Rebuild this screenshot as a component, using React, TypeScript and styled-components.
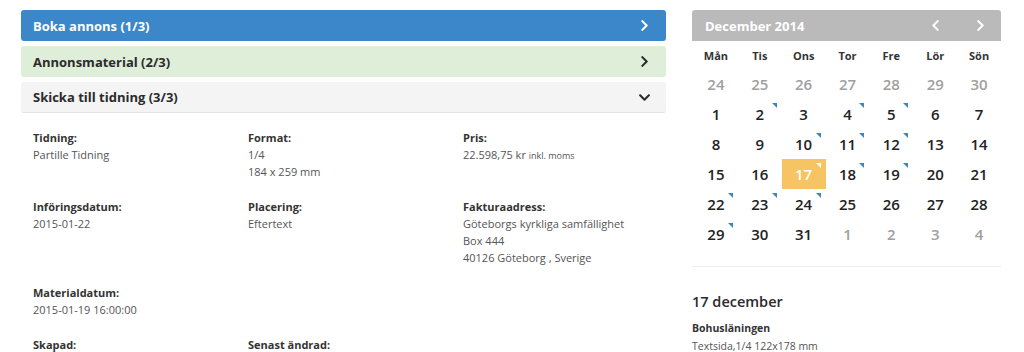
import styled, { createGlobalStyle } from "styled-components";
import { FaChevronRight, FaChevronLeft, FaChevronDown } from "react-icons/fa";

const GlobalStyle = createGlobalStyle`
  html, body {
    margin: 0;
    padding: 0;
    background: #fff;
  }
  body {
    font-family: "Open Sans", "Noto Sans", sans-serif;
    color: #333;
  }
`;

const Page = styled.div`
  display: flex;
  gap: 26px;
  padding: 10px 21px 0;
  width: 1024px;
  height: 352px;
  box-sizing: border-box;
  overflow: hidden;
`;

const Main = styled.div`
  width: 645px;
  flex-shrink: 0;
`;

const Steps = styled.div`
  display: flex;
  flex-direction: column;
  gap: 5px;
`;

const Step = styled.div<{ $variant: "active" | "done" | "open" }>`
  display: flex;
  align-items: center;
  justify-content: space-between;
  height: 31px;
  padding: 0 15px 0 12px;
  border-radius: 3px;
  font-size: 13px;
  font-weight: 700;
  box-sizing: border-box;
  background: ${(p) =>
    p.$variant === "active" ? "#3c87c9" : p.$variant === "done" ? "#dfeed9" : "#f4f4f4"};
  color: ${(p) => (p.$variant === "active" ? "#fff" : "#2b2b2b")};
  border-bottom: ${(p) => (p.$variant === "open" ? "1px solid #e3e3e3" : "none")};
  svg {
    width: 13px;
    height: 13px;
  }
`;

const Details = styled.div`
  display: flex;
  flex-direction: column;
  gap: 18px;
  padding: 16px 12px 0;
`;

const Row = styled.div`
  display: grid;
  grid-template-columns: 215px 215px 215px;
`;

const Field = styled.div`
  font-size: 11px;
  line-height: 17px;
  color: #555;
`;

const Label = styled.div`
  font-weight: 700;
  color: #333;
`;

const Small = styled.span`
  font-size: 9px;
`;

const Side = styled.div`
  width: 309px;
  flex-shrink: 0;
`;

const CalHeader = styled.div`
  display: flex;
  align-items: center;
  height: 31px;
  padding: 0 14px 0 13px;
  background: #bababa;
  border-radius: 3px 3px 0 0;
  color: #fff;
  font-size: 13px;
  font-weight: 700;
`;

const CalTitle = styled.div`
  flex: 1;
`;

const NavButton = styled.span`
  display: flex;
  width: 32px;
  justify-content: flex-end;
  svg {
    width: 13px;
    height: 13px;
  }
  & + & {
    width: 45px;
  }
`;

const Grid = styled.div`
  display: grid;
  grid-template-columns: repeat(7, 1fr);
  padding-left: 2px;
`;

const DayName = styled.div`
  height: 28px;
  display: flex;
  align-items: center;
  justify-content: center;
  font-size: 11px;
  font-weight: 700;
  color: #333;
`;

const Day = styled.div<{ $muted?: boolean; $selected?: boolean }>`
  position: relative;
  height: 30px;
  display: flex;
  align-items: center;
  justify-content: center;
  font-size: 15px;
  font-weight: 600;
  color: ${(p) => (p.$selected ? "#fff" : p.$muted ? "#a0a0a0" : "#222")};
  background: ${(p) => (p.$selected ? "#f6c463" : "transparent")};
`;

const Marker = styled.span<{ $light?: boolean }>`
  position: absolute;
  top: 4px;
  right: 5px;
  width: 0;
  height: 0;
  border-top: 5px solid ${(p) => (p.$light ? "#fff" : "#3f86bf")};
  border-left: 5px solid transparent;
`;

const Divider = styled.div`
  height: 1px;
  background: #eeeeee;
  margin: 17px 0 25px;
`;

const DayTitle = styled.div`
  font-size: 14.5px;
  font-weight: 600;
  color: #2b2b2b;
  margin-bottom: 9px;
`;

const Event = styled.div`
  font-size: 10.5px;
  line-height: 17.5px;
  color: #555;
`;

type Cell = { d: number; muted?: boolean; mark?: boolean; selected?: boolean };

const marked = new Set([2, 4, 5, 10, 11, 12, 17, 18, 19, 22, 23, 24, 29]);

const cells: Cell[] = [
  ...[24, 25, 26, 27, 28, 29, 30].map((d) => ({ d, muted: true })),
  ...Array.from({ length: 31 }, (_, i) => ({
    d: i + 1,
    mark: marked.has(i + 1),
    selected: i + 1 === 17,
  })),
  ...[1, 2, 3, 4].map((d) => ({ d, muted: true })),
];

const dayNames = ["Mån", "Tis", "Ons", "Tor", "Fre", "Lör", "Sön"];

const fields: { label: string; values: React.ReactNode[] }[][] = [
  [
    { label: "Tidning:", values: ["Partille Tidning"] },
    { label: "Format:", values: ["1/4", "184 x 259 mm"] },
    {
      label: "Pris:",
      values: [
        <>
          22.598,75 kr <Small>inkl. moms</Small>
        </>,
      ],
    },
  ],
  [
    { label: "Införingsdatum:", values: ["2015-01-22"] },
    { label: "Placering:", values: ["Eftertext"] },
    {
      label: "Fakturaadress:",
      values: ["Göteborgs kyrkliga samfällighet", "Box 444", "40126 Göteborg , Sverige"],
    },
  ],
  [{ label: "Materialdatum:", values: ["2015-01-19 16:00:00"] }],
  [
    { label: "Skapad:", values: [] },
    { label: "Senast ändrad:", values: [] },
  ],
];

export default function App() {
  return (
    <>
      <GlobalStyle />
      <Page>
        <Main>
          <Steps>
            <Step $variant="active">
              Boka annons (1/3)
              <FaChevronRight />
            </Step>
            <Step $variant="done">
              Annonsmaterial (2/3)
              <FaChevronRight />
            </Step>
            <Step $variant="open">
              Skicka till tidning (3/3)
              <FaChevronDown />
            </Step>
          </Steps>
          <Details>
            {fields.map((row, i) => (
              <Row key={i}>
                {row.map((f) => (
                  <Field key={f.label}>
                    <Label>{f.label}</Label>
                    {f.values.map((v, j) => (
                      <div key={j}>{v}</div>
                    ))}
                  </Field>
                ))}
              </Row>
            ))}
          </Details>
        </Main>
        <Side>
          <CalHeader>
            <CalTitle>December 2014</CalTitle>
            <NavButton>
              <FaChevronLeft />
            </NavButton>
            <NavButton>
              <FaChevronRight />
            </NavButton>
          </CalHeader>
          <Grid>
            {dayNames.map((n) => (
              <DayName key={n}>{n}</DayName>
            ))}
            {cells.map((c, i) => (
              <Day key={i} $muted={c.muted} $selected={c.selected}>
                {c.d}
                {c.mark && <Marker $light={c.selected} />}
              </Day>
            ))}
          </Grid>
          <Divider />
          <DayTitle>17 december</DayTitle>
          <Event>
            <Label>Bohusläningen</Label>
            Textsida,1/4 122x178 mm
          </Event>
        </Side>
      </Page>
    </>
  );
}
